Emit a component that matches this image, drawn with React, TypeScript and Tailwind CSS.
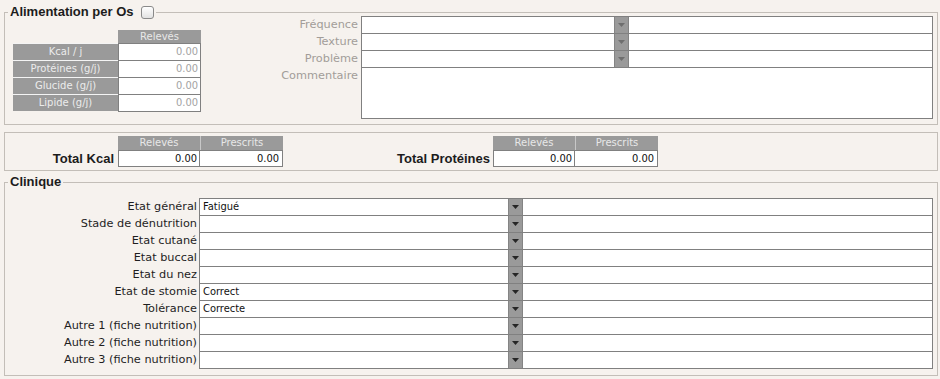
const sans = "font-['DejaVu_Sans',Verdana,sans-serif]";
const cond = "font-['DejaVu_Sans_Condensed','DejaVu_Sans',sans-serif]";
const bold = "font-['Liberation_Sans',Arial,sans-serif] font-bold text-[13px]";

const alimRows = ["Kcal / j", "Protéines (g/j)", "Glucide (g/j)", "Lipide (g/j)"];
const alimSelects = ["Fréquence", "Texture", "Problème"];

const clinique = [
  { label: "Etat général", value: "Fatigué" },
  { label: "Stade de dénutrition", value: "" },
  { label: "Etat cutané", value: "" },
  { label: "Etat buccal", value: "" },
  { label: "Etat du nez", value: "" },
  { label: "Etat de stomie", value: "Correct" },
  { label: "Tolérance", value: "Correcte" },
  { label: "Autre 1 (fiche nutrition)", value: "" },
  { label: "Autre 2 (fiche nutrition)", value: "" },
  { label: "Autre 3 (fiche nutrition)", value: "" },
];

function Arrow({ dark }: { dark?: boolean }) {
  return (
    <svg width="7" height="4" viewBox="0 0 7 4">
      <path d="M0 0h7L3.5 4z" fill={dark ? "#262626" : "#6e6e6e"} />
    </svg>
  );
}

function DropButton({ dark }: { dark?: boolean }) {
  return (
    <div className="w-[15px] h-full bg-[#9a9a9a] border-x border-[#848484] flex items-center justify-center">
      <Arrow dark={dark} />
    </div>
  );
}

function Legend({ children }: { children: React.ReactNode }) {
  return (
    <div className="absolute left-[3px] top-[-9px] px-[2px] bg-[#f6f2ee] flex items-center leading-[16px]">
      {children}
    </div>
  );
}

function TotalTable() {
  return (
    <div className="w-[165px]">
      <div className={`flex h-[14px] bg-[#9a9a9a] text-[10px] leading-[14px] text-[#e8e8e8] ${sans}`}>
        <div className="w-[82px] text-center">Relevés</div>
        <div className="w-px bg-[#c8c8c8]" />
        <div className="w-[82px] text-center">Prescrits</div>
      </div>
      <div className={`flex h-[17px] border border-[#808080] bg-white text-[11px] leading-[15px] text-[#111] ${cond}`}>
        <div className="w-[81px] border-r border-[#808080] text-right pr-[2px]">0.00</div>
        <div className="w-[81px] text-right pr-[2px]">0.00</div>
      </div>
    </div>
  );
}

export default function App() {
  return (
    <div className={`min-h-screen bg-[#f6f2ee] pt-[12px] pl-[4px] ${sans} text-[11.3px]`}>
      {/* Alimentation per Os */}
      <div className="relative w-[934px] h-[113px] border border-[#c3beb8]">
        <Legend>
          <span className={`${bold} text-[#1c1c1c]`}>Alimentation per Os</span>
          <span className="ml-[7px] w-[13px] h-[13px] rounded-[3px] border border-[#8a8a8a] bg-gradient-to-b from-white to-[#e2e2e2]" />
        </Legend>
        <div className="flex items-start">
          <div className="ml-[8px] mt-[17px]">
            <div className="ml-[105px] w-[83px] h-[13px] bg-[#9a9a9a] text-[10px] leading-[13px] text-center text-[#e8e8e8]">
              Relevés
            </div>
            {alimRows.map((r) => (
              <div key={r} className="flex h-[17px]">
                <div className="w-[105px] bg-[#9a9a9a] border-t border-[#f4f4f4] text-[10px] leading-[16px] text-center text-[#ececec]">
                  {r}
                </div>
                <div className={`w-[83px] bg-white border-x border-t border-[#808080] text-right pr-[2px] text-[11px] leading-[15px] text-[#a3a3a3] ${cond}`}>
                  0.00
                </div>
              </div>
            ))}
            <div className="ml-[105px] w-[83px] h-px bg-[#808080]" />
          </div>
          <div className="flex mt-[3px]">
            <div className="w-[160px] pr-[3px] text-right text-[#a29d99]">
              {alimSelects.map((l) => (
                <div key={l} className="h-[17px] leading-[17px]">
                  {l}
                </div>
              ))}
              <div className="h-[17px] leading-[17px]">Commentaire</div>
            </div>
            <div className="w-[572px] border border-[#808080] bg-white">
              {alimSelects.map((l) => (
                <div key={l} className="flex h-[17px] border-b border-[#808080]">
                  <div className="flex-1" />
                  <DropButton />
                  <div className="w-[303px]" />
                </div>
              ))}
              <div className="h-[50px]" />
            </div>
          </div>
        </div>
      </div>

      {/* Totaux */}
      <div className="mt-[7px] w-[934px] h-[39px] border border-[#c3beb8] pt-[3px] flex items-end pb-[3px]">
        <div className={`w-[113px] h-[17px] pr-[4px] text-right leading-[17px] ${bold} text-[#1c1c1c]`}>Total Kcal</div>
        <TotalTable />
        <div className={`w-[210px] h-[17px] pr-[3px] text-right leading-[17px] ${bold} text-[#1c1c1c]`}>Total Protéines</div>
        <TotalTable />
      </div>

      {/* Clinique */}
      <div className="relative mt-[11px] w-[934px] h-[194px] border border-[#c3beb8] pt-[15px]">
        <Legend>
          <span className={`${bold} text-[#1c1c1c]`}>Clinique</span>
        </Legend>
        <div className="flex">
          <div className="w-[194px] pr-[2px] text-right text-[#1e1e1e]">
            {clinique.map((c) => (
              <div key={c.label} className="h-[17px] leading-[17px]">
                {c.label}
              </div>
            ))}
          </div>
          <div className="w-[734px] border border-[#808080] bg-white">
            {clinique.map((c, i) => (
              <div
                key={c.label}
                className={`flex ${i < clinique.length - 1 ? "h-[17px] border-b border-[#808080]" : "h-[16px]"}`}
              >
                <div className={`flex-1 pl-[3px] leading-[16px] text-[11px] text-[#111] ${cond}`}>{c.value}</div>
                <DropButton dark />
                <div className="w-[409px]" />
              </div>
            ))}
          </div>
        </div>
      </div>
    </div>
  );
}
